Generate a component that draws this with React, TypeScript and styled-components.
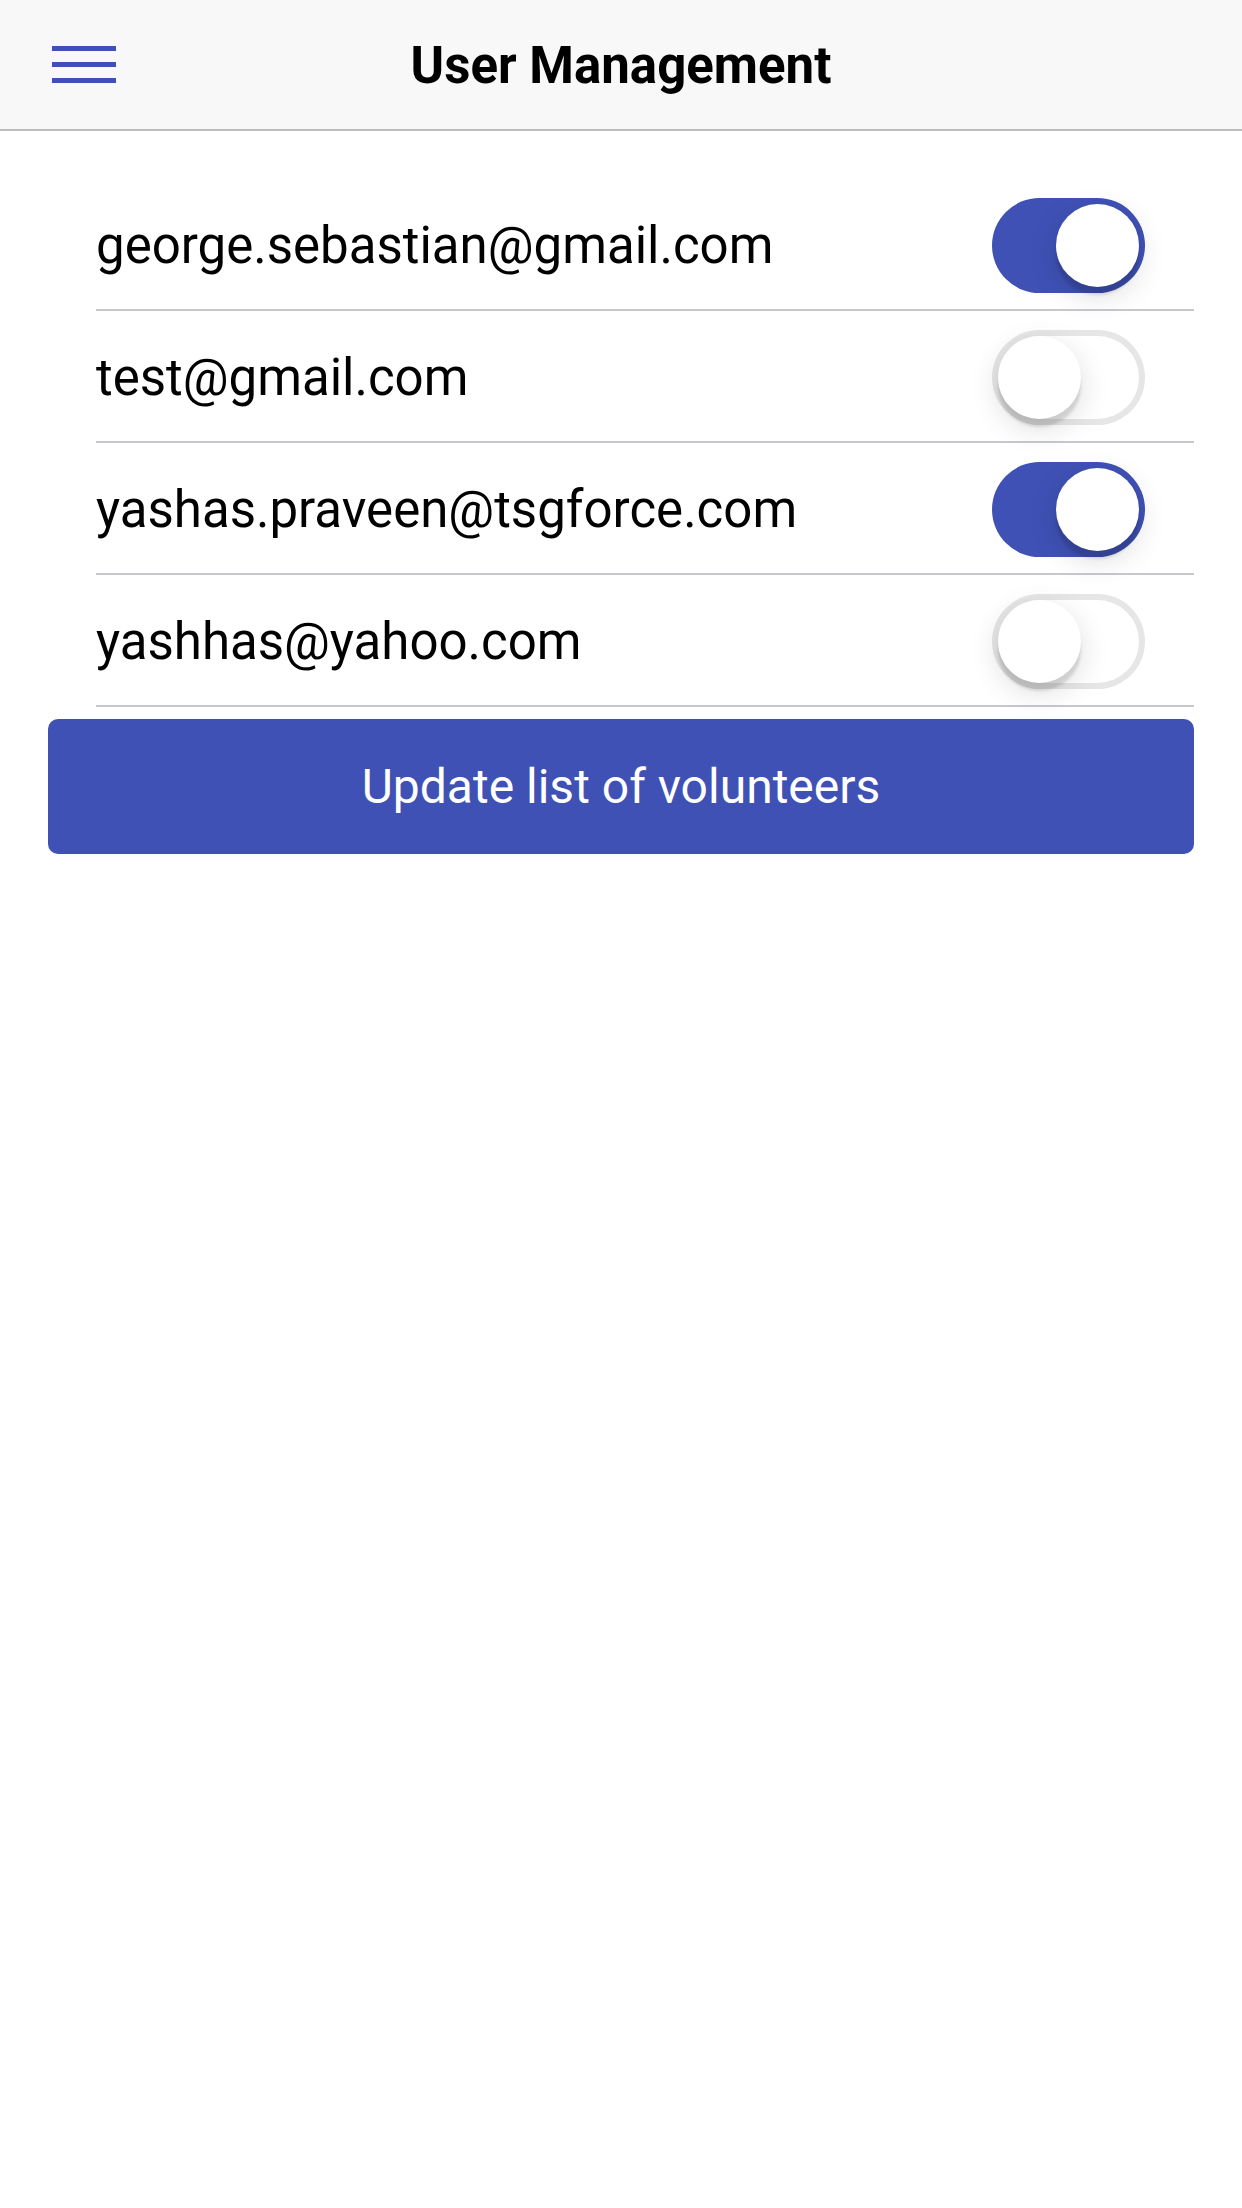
import React, { useState } from "react";
import styled, { createGlobalStyle } from "styled-components";

const GlobalStyle = createGlobalStyle`
  html, body {
    margin: 0;
    padding: 0;
    background: #ffffff;
    font-family: Roboto, "Noto Sans", "Liberation Sans", sans-serif;
    color: #000000;
  }
`;

const Page = styled.div`
  width: 1242px;
  min-height: 2208px;
  background: #ffffff;
`;

const Header = styled.header`
  display: grid;
  grid-template-columns: 1fr auto 1fr;
  align-items: center;
  height: 129px;
  background: #f8f8f8;
  border-bottom: 2px solid #bdbdbd;
`;

const MenuButton = styled.button`
  justify-self: start;
  display: flex;
  flex-direction: column;
  gap: 11px;
  margin-left: 52px;
  padding: 0;
  border: none;
  background: transparent;
  cursor: pointer;
`;

const MenuLine = styled.span`
  display: block;
  width: 64px;
  height: 5px;
  background: #3f51b5;
`;

const Title = styled.h1`
  margin: 0;
  padding-top: 2px;
  font-size: 51px;
  font-weight: 700;
`;

const Content = styled.main`
  padding-top: 48px;
`;

const List = styled.div`
  margin: 0 48px;
`;

const Item = styled.div`
  padding-left: 48px;
`;

const ItemInner = styled.div`
  display: flex;
  align-items: center;
  justify-content: space-between;
  height: 130px;
  padding-right: 49px;
  border-bottom: 2px solid #c8c7cc;
`;

const Email = styled.span`
  padding-top: 2px;
  font-size: 51px;
  font-weight: 400;
`;

// iOS style switch; the knob slides over the track
const Track = styled.button<{ $on: boolean }>`
  position: relative;
  width: 153px;
  height: 95px;
  margin-top: 2px;
  padding: 0;
  border-radius: 48px;
  border: none;
  cursor: pointer;
  background: ${(p) => (p.$on ? "#3f51b5" : "#ffffff")};
  box-shadow: ${(p) => (p.$on ? "none" : "inset 0 0 0 6px #e6e6e6")};
  transition: background 0.2s ease;
`;

const Knob = styled.span<{ $on: boolean }>`
  position: absolute;
  top: 6px;
  left: ${(p) => (p.$on ? "64px" : "6px")};
  width: 83px;
  height: 83px;
  border-radius: 50%;
  background: #ffffff;
  box-shadow: 0 8px 3px rgba(0, 0, 0, 0.12), 0 9px 30px rgba(0, 0, 0, 0.14);
  transition: left 0.2s ease;
`;

const UpdateButton = styled.button`
  display: flex;
  align-items: center;
  justify-content: center;
  box-sizing: border-box;
  width: calc(100% - 96px);
  height: 135px;
  margin: 12px 48px 0;
  border: none;
  border-radius: 10px;
  background: #3f51b5;
  color: #ffffff;
  font-family: inherit;
  font-size: 48px;
  font-weight: 400;
  cursor: pointer;
`;

const initialUsers = [
  { email: "george.sebastian@gmail.com", volunteer: true },
  { email: "test@gmail.com", volunteer: false },
  { email: "yashas.praveen@tsgforce.com", volunteer: true },
  { email: "yashhas@yahoo.com", volunteer: false },
];

export default function App() {
  const [users, setUsers] = useState(initialUsers);

  const toggle = (index: number) => {
    setUsers((list) =>
      list.map((u, i) => (i === index ? { ...u, volunteer: !u.volunteer } : u))
    );
  };

  return (
    <Page>
      <GlobalStyle />
      <Header>
        <MenuButton aria-label="menu">
          <MenuLine />
          <MenuLine />
          <MenuLine />
        </MenuButton>
        <Title>User Management</Title>
        <span />
      </Header>
      <Content>
        <List>
          {users.map((u, i) => (
            <Item key={u.email}>
              <ItemInner>
                <Email>{u.email}</Email>
                <Track $on={u.volunteer} onClick={() => toggle(i)}>
                  <Knob $on={u.volunteer} />
                </Track>
              </ItemInner>
            </Item>
          ))}
        </List>
        <UpdateButton>Update list of volunteers</UpdateButton>
      </Content>
    </Page>
  );
}
